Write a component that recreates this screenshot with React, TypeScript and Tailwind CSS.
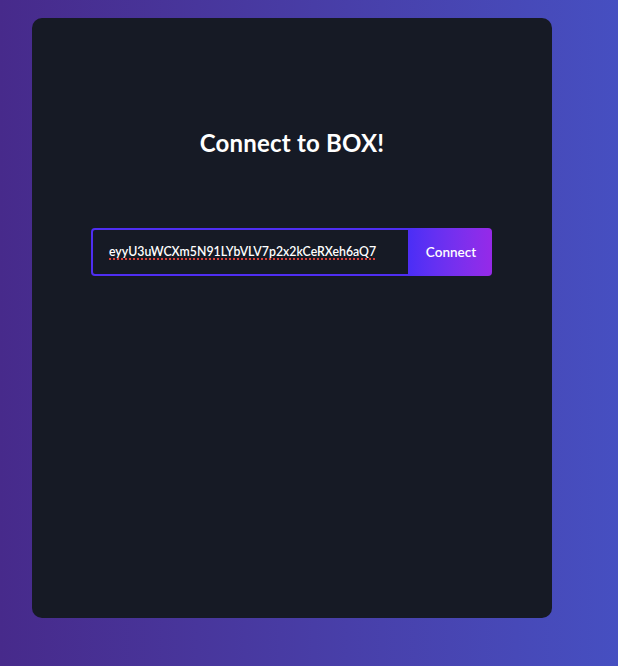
import React from 'react'

const token = 'eyyU3uWCXm5N91LYbVLV7p2x2kCeRXeh6aQ7'

const App = () => {
  return (
    <div
      className="min-h-[666px] w-full bg-gradient-to-r from-[#472a8b] to-[#464fc1] pt-[18px] pl-[32px]"
      style={{ fontFamily: '"Trebuchet MS", Lato, "Noto Sans", sans-serif' }}
    >
      <div className="w-[520px] h-[600px] bg-[#161a25] rounded-[10px] flex flex-col items-center">
        <h1 className="mt-[110px] text-[24px] font-bold text-white leading-[30px] tracking-[0.2px]">
          Connect to BOX!
        </h1>

        <form
          className="mt-[70px] flex w-[402px] h-[48px] pr-[1px]"
          onSubmit={(e) => e.preventDefault()}
        >
          <div className="flex-1 min-w-0 h-full flex items-center border-2 border-[#4f2ef2] rounded-l-[4px] pl-[16px] overflow-hidden">
            <span className="text-[12.3px] font-semibold text-white whitespace-nowrap underline decoration-dotted decoration-[#e0403a] decoration-2 underline-offset-[3px]">
              {token}
            </span>
          </div>
          <button
            type="submit"
            className="w-[82px] h-full rounded-r-[4px] bg-gradient-to-r from-[#4c2ef6] to-[#9629e8] text-white text-[13.5px] font-semibold"
          >
            Connect
          </button>
        </form>
      </div>
    </div>
  )
}

export default App
